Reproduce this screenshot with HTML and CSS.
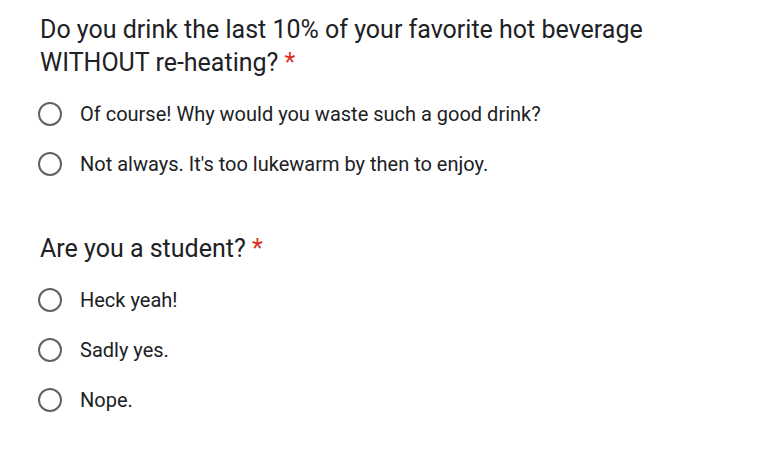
FILE: index.html
```html
<!DOCTYPE html>
<html>
<head>
<meta charset="utf-8">
<link rel="stylesheet" href="styles.css">
</head>
<body>
<div class="form">
  <div class="question">
    <div class="title">Do you drink the last 10% of your favorite hot beverage WITHOUT re-heating? <span class="req">*</span></div>
    <div class="options">
      <label class="option"><span class="radio"></span><span class="text">Of course! Why would you waste such a good drink?</span></label>
      <label class="option"><span class="radio"></span><span class="text">Not always. It's too lukewarm by then to enjoy.</span></label>
    </div>
  </div>
  <div class="question">
    <div class="title">Are you a student? <span class="req">*</span></div>
    <div class="options">
      <label class="option"><span class="radio"></span><span class="text">Heck yeah!</span></label>
      <label class="option"><span class="radio"></span><span class="text">Sadly yes.</span></label>
      <label class="option"><span class="radio"></span><span class="text">Nope.</span></label>
    </div>
  </div>
</div>
</body>
</html>
```

FILE: styles.css
```css
html, body {
  margin: 0;
  padding: 0;
  background: #ffffff;
}
body {
  font-family: Roboto, "Liberation Sans", sans-serif;
  color: #202124;
}
.form {
  padding: 13px 40px 0 40px;
  width: 650px;
  display: flex;
  flex-direction: column;
  gap: 43px;
}
.title {
  font-size: 25px;
  line-height: 33px;
  color: #202124;
}
.req {
  color: #d93025;
}
.options {
  display: flex;
  flex-direction: column;
  margin-top: 10px;
  margin-left: -2px;
}
.option {
  display: flex;
  align-items: center;
  height: 50px;
  gap: 18px;
}
.radio {
  box-sizing: border-box;
  width: 24px;
  height: 24px;
  border: 2px solid #5f6368;
  border-radius: 50%;
  flex: none;
}
.text {
  font-size: 20px;
  color: #202124;
}
```
